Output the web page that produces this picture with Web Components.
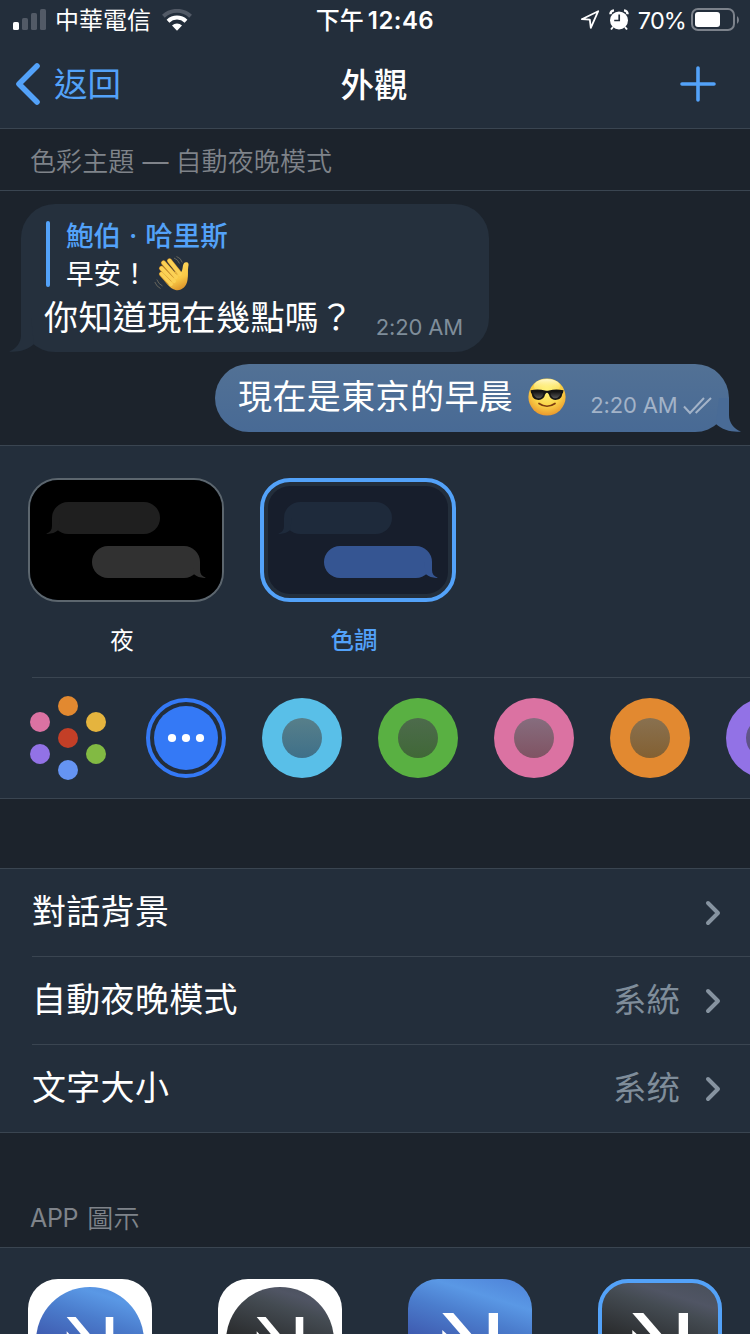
<!DOCTYPE html>
<html lang="zh-Hant">
<head>
<meta charset="utf-8">
<title>外觀</title>
<style>
html,body{margin:0;padding:0;background:#1c232c}
body{width:750px;height:1334px;overflow:hidden;font-family:Inter,"Noto Sans CJK TC",sans-serif;color:#fff;
--bar:#232e3b;--line:#3a4551;--blue:#53a2f9;--muted:#7f8d9a}
</style>
</head>
<body>
<appearance-screen></appearance-screen>
<script>
function define(name, html){
  customElements.define(name, class extends HTMLElement{
    connectedCallback(){
      if(this.shadowRoot) return;
      const t=document.createElement('template');
      t.innerHTML=typeof html==='function'?html(this):html;
      this.attachShadow({mode:'open'}).append(t.content.cloneNode(true));
    }
  });
}
const cjk='"Noto Sans CJK TC",Inter,sans-serif';

define('status-bar',`
<style>
:host{display:grid;grid-template-columns:1fr auto 1fr;height:40px;align-items:center;line-height:40px;font-size:24px;white-space:nowrap}
.l,.r{display:flex;align-items:center;height:40px}
.l{padding-left:13px}.r{justify-content:flex-end;padding-right:10px}
.c{display:flex;font-weight:600;gap:4px;height:40px}
.cj{font-family:${cjk};font-weight:500;position:relative;top:-1px}
svg{display:block;flex:none}
</style>
<div class="l">
<svg width="34" height="22" viewBox="0 0 34 22"><rect x="0" y="13" width="6" height="8" rx="1.6" fill="#fff"/><g fill="#525a66"><rect x="9" y="9" width="6" height="12" rx="1.6"/><rect x="18" y="4" width="6" height="17" rx="1.6"/><rect x="27" y="0" width="6" height="21" rx="1.6"/></g></svg>
<span class="cj" style="margin-left:8px;font-weight:400">中華電信</span>
<svg style="margin-left:11px" width="30" height="23" viewBox="0 0 30 23"><g fill="none" stroke-width="4"><path d="M1.4 7.2A20 20 0 0 1 28.6 7.2" stroke="#525a66"/><path d="M6 12.2A13 13 0 0 1 24 12.2" stroke="#fff" stroke-width="4"/></g><path d="M10 16.500a7.300 7.300 0 0 1 10 0l-5 5.200z" fill="#fff"/></svg>
</div>
<div class="c"><span class="cj">下午</span><span style="letter-spacing:.45px;position:relative;top:1px">12:46</span></div>
<div class="r">
<svg width="20" height="20" viewBox="0 0 20 20"><path d="M1.8 9.2L18.2 1.2L10.8 17.8L9.8 9.7Z" fill="none" stroke="#fff" stroke-width="1.8" stroke-linejoin="round"/></svg>
<svg style="margin-left:9px" width="20" height="22" viewBox="0 0 20 22"><circle cx="10" cy="11.4" r="9" fill="#fff"/><path d="M1.4 5.2A4 4 0 0 1 5 1.4M18.6 5.2A4 4 0 0 0 15 1.4" stroke="#fff" stroke-width="2.4" fill="none"/><path d="M4 18l-2 2.5M16 18l2 2.5" stroke="#fff" stroke-width="2"/><path d="M10.2 5.500v6H5.200" fill="none" stroke="#232e3b" stroke-width="1.700"/></svg>
<span style="margin-left:9px;font-size:23.500px;letter-spacing:-.9px;position:relative;top:1px">70%</span>
<svg style="margin-left:5px" width="49" height="24" viewBox="0 0 49 24"><rect x="1" y="1" width="42" height="21" rx="6" fill="none" stroke="#7c828b" stroke-width="2"/><rect x="4" y="4" width="25" height="15" rx="3" fill="#fff"/><path d="M46 8q2 1.500 2 4t-2 4z" fill="#7c828b"/></svg>
</div>`);

define('nav-bar',`
<style>
:host{display:grid;grid-template-columns:1fr auto 1fr;height:88px;align-items:center;font:400 33.500px/88px ${cjk};border-bottom:1px solid var(--line)}
.b{display:flex;align-items:center;color:var(--blue);padding-left:15px;height:88px}
.b span{position:relative;top:-2px}
.t{font-weight:500;position:relative;top:-1px;left:-1px}
.p{justify-self:end;margin-right:34px}
svg{display:block}
</style>
<div class="b"><svg width="26" height="44" viewBox="0 0 26 44"><path d="M22 4L4 22L22 40" fill="none" stroke="#53a2f9" stroke-width="5.600" stroke-linecap="round" stroke-linejoin="round"/></svg><span style="margin-left:13px">返回</span></div>
<div class="t">外觀</div>
<svg class="p" width="36" height="36" viewBox="0 0 36 36"><path d="M18 2V34M2 18H34" stroke="#53a2f9" stroke-width="3.600" stroke-linecap="round"/></svg>`);

define('section-title',`
<style>
:host{display:flex;box-sizing:border-box;align-items:flex-end;padding-left:30px;font:350 26px/61px ${cjk};letter-spacing:.1px;color:#7f838a;border-bottom:1px solid var(--line);white-space:nowrap}
</style><slot></slot>`);

define('chat-bubble',e=>`
<style>
:host{display:block;position:relative;box-sizing:border-box;border-radius:34px;background:var(--bubble)}
svg{position:absolute;bottom:0;width:26px;height:34px;${e.getAttribute('side')==='in'?'left:-12px;transform:scaleX(-1)':'right:-12px'}}
.b{position:relative}
</style>
<svg viewBox="0 0 26 34"><path d="M4 0H14V17C14 25 19 31 26 33.500C18 34.600 7 32 1 26Z" fill="${e.getAttribute('tail')}"/></svg>
<div class="b"><slot></slot></div>`);

define('wave-emoji',`
<style>:host{display:block;width:38px;height:38px}svg{display:block}</style>
<svg width="38" height="38" viewBox="0 0 38 38" role="img" aria-label="👋"><defs><linearGradient id="g" x1=".2" y1="0" x2=".7" y2="1"><stop offset="0" stop-color="#ffdb63"/><stop offset=".65" stop-color="#f9c947"/><stop offset="1" stop-color="#dc9329"/></linearGradient></defs>
<path d="M6.500 18.500L17 23L23 14L26.500 18.500C28.500 17.500 28.500 14 29 11.500Q29.800 7.500 33 8.300Q35.300 9 34.300 12.500C33.500 16 34.500 21 33.500 26C32.500 33 27 37.300 21.500 36C16 34.500 12 29 6.500 21.500Z" fill="url(#g)"/>
<g stroke="#c88a27" stroke-width="5" stroke-linecap="round" fill="none"><path d="M7.500 20L15 28"/><path d="M7.500 14.300L17 24.500"/><path d="M9.500 8.800L20 21"/><path d="M15.500 6.800L24.500 18"/></g>
<g stroke="#fbd155" stroke-width="3.900" stroke-linecap="round" fill="none"><path d="M7.500 20L17 30"/><path d="M7.500 14.300L20 27"/><path d="M9.500 8.800L22 23"/><path d="M15.500 6.800L26 20"/></g>
<g stroke="#66655c" stroke-width="1" fill="none"><path d="M20 4Q24 5.500 25.500 9.500M22.500 2.500Q27 4 28.300 8.500M2.800 25.500Q4.500 30 8.500 32M.8 28Q2.500 32.500 6.500 34.500"/></g></svg>`);

define('cool-emoji',`
<style>:host{display:block;width:38px;height:38px}svg{display:block}</style>
<svg width="38" height="38" viewBox="0 0 38 38" role="img" aria-label="😎"><defs><radialGradient id="f" cx=".5" cy=".35" r=".68"><stop offset="0" stop-color="#fff47c"/><stop offset=".55" stop-color="#fbd549"/><stop offset="1" stop-color="#e8912a"/></radialGradient><linearGradient id="h" x1="0" y1="0" x2="0" y2="1"><stop offset="0" stop-color="#fffce0" stop-opacity=".9"/><stop offset="1" stop-color="#fff36b" stop-opacity="0"/></linearGradient><linearGradient id="l" x1="0" y1="0" x2="0" y2="1"><stop offset="0" stop-color="#111"/><stop offset="1" stop-color="#555"/></linearGradient></defs>
<circle cx="19" cy="19" r="18.600" fill="url(#f)"/><ellipse cx="19" cy="8" rx="13" ry="7" fill="url(#h)"/>
<path d="M2.500 12.200Q10 10.500 17 12.400Q19 13 21 12.400Q28 10.500 35.500 12.200L35 14.800Q34.200 15.500 34 17C33 23 24 23.500 21.600 18.500Q20.500 14.800 19 14.800Q17.500 14.800 16.400 18.500C14 23.500 5 23 4 17Q3.800 15.500 3 14.800Z" fill="#141414"/>
<path d="M5 14.200Q11 12.500 15.500 14.500C15.500 22 6.500 22.500 5 14.200ZM33 14.200Q27 12.500 22.500 14.500C22.500 22 31.500 22.500 33 14.200Z" fill="url(#l)"/>
<path d="M11 25.500Q19 31 27 25.500" fill="none" stroke="#7c3b10" stroke-width="1.700" stroke-linecap="round"/></svg>`);

define('chat-preview',`
<style>
:host{display:flex;flex-direction:column;box-sizing:border-box;height:255px;padding:13px 21px 13px;gap:12px;border-bottom:1px solid var(--line);font-family:${cjk};white-space:nowrap}
.in{width:468px;height:148px;--bubble:#25303d}
.out{width:514px;height:68px;align-self:flex-end;--bubble:linear-gradient(#527195,#486a95)}
.quote{display:flex;margin-left:25px;padding-top:17px}
.bar{width:4px;height:66px;border-radius:2px;background:var(--blue)}
.q{margin:-6px 0 -1px 16px;font-size:27.500px;line-height:38px}
.n{color:var(--blue);font-weight:500;height:38px}
.n i{font:500 27.500px/30px Inter;padding:0 8px}
.row{display:flex;align-items:center}
.m{font-size:34px;letter-spacing:.4px}
.tm{font:400 22px/30px Inter;letter-spacing:-.15px;color:var(--muted)}
</style>
<chat-bubble class="in" side="in" tail="#25303d">
<div class="quote"><div class="bar"></div><div class="q"><div class="n">鮑伯<i>·</i>哈里斯</div><div class="row"><span>早安！</span><wave-emoji style="margin:1px 0 -1px 5px"></wave-emoji></div></div></div>
<div class="row" style="margin:0 26px 0 23px;height:52px;justify-content:space-between;line-height:52px"><span class="m">你知道現在幾點嗎？</span><span class="tm" style="padding-top:21px">2:20 AM</span></div>
</chat-bubble>
<chat-bubble class="out" side="out" tail="#496b96">
<div class="row" style="padding-left:23px;height:68px;line-height:60px"><span class="m" style="margin-top:-6px">現在是東京的早晨</span><cool-emoji style="margin:-2px 0 0 15px"></cool-emoji><span class="tm" style="color:#a3b3c8;margin-left:24px;padding-top:14px">2:20 AM</span><svg style="margin:16px 0 0 6px" width="30" height="20" viewBox="0 0 30 20"><path d="M1 10.500L7 17L21 2M12.700 17L28 2" fill="none" stroke="#a3b3c8" stroke-width="2"/></svg></div>
</chat-bubble>`);

define('theme-card',e=>{
 const s=e.hasAttribute('selected'), b=flip=>`<svg width="126" height="32" viewBox="0 0 126 32"><g ${flip?'transform="translate(112 0) scale(-1 1)"':'transform="translate(5 0)"'}><rect width="108" height="32" rx="16"/><path d="M108 16V24C108 28 110 30.500 114 31.800C110 32.300 105 31 102 28.300L100 16Z"/></g></svg>`;
 return `
<style>
:host{display:flex;flex-direction:column;width:196px}
.f{box-sizing:border-box;height:124px;border-radius:30px;padding:${s?'4px':'0'};border:${s?'4px solid var(--blue)':'2px solid #5c666e'}}
.i{box-sizing:border-box;height:100%;border-radius:${s?22:28}px;background:${s?'#171e2c':'#000'};padding:${s?'16px 12px':'22px 18px'};display:flex;flex-direction:column;gap:12px}
svg{display:block;overflow:visible}.a{fill:${s?'#1e2a3b':'#1f1f1f'}}.o{fill:${s?'#355592':'#313131'};margin-left:39px}
.t{font:400 23.500px/40px ${cjk};${s?'font-weight:500;':''}color:${s?'var(--blue)':'#fff'};text-align:center;margin:17px 8px 0 0}
</style>
<div class="f"><div class="i"><div class="a">${b(true)}</div><div class="o">${b(false)}</div></div></div><div class="t"><slot></slot></div>`});

define('accent-dot',e=>{
 const k=e.getAttribute('kind'), c=e.getAttribute('color'), m=e.getAttribute('inner')||'';
 let g;
 if(k==='wheel') g=[[40,8,'#e28930'],[12,24,'#db72a2'],[68,24,'#e5b43e'],[40,40,'#c33f27'],[12,56,'#9272e6'],[68,56,'#82ba43'],[40,72,'#6594f3']].map(a=>`<circle cx="${a[0]}" cy="${a[1]}" r="10" fill="${a[2]}"/>`).join('');
 else if(k==='more') g='<circle cx="40" cy="40" r="38" fill="none" stroke="#3479f6" stroke-width="4"/><circle cx="40" cy="40" r="32" fill="#3479f6"/><g fill="#fff"><circle cx="26" cy="40" r="4.100"/><circle cx="40" cy="40" r="4.100"/><circle cx="54" cy="40" r="4.100"/></g>';
 else {const [a,b]=m.split(','); g=`<defs><linearGradient id="g" x2="0" y2="1"><stop stop-color="${a}"/><stop offset="1" stop-color="${b}"/></linearGradient></defs><circle cx="40" cy="40" r="40" fill="${c}"/><circle cx="40" cy="40" r="20" fill="url(#g)"/>`}
 return `<style>:host{display:block;flex:none;width:80px;height:80px}:host([kind=wheel]){margin-right:2px}svg{display:block;overflow:visible}</style><svg width="80" height="80" viewBox="0 0 80 80">${g}</svg>`});

define('theme-panel',`
<style>
:host{display:block;box-sizing:border-box;height:353px;background:var(--bar);border-bottom:1px solid var(--line)}
.c{display:flex;gap:36px;box-sizing:border-box;height:231px;padding:32px 28px 0}
.d{display:flex;gap:36px;height:120px;box-sizing:border-box;padding:20px 0 0 28px;overflow:hidden}
.l{height:1px;margin-left:32px;background:var(--line)}
</style>
<div class="c"><theme-card>夜</theme-card><theme-card selected>色調</theme-card></div>
<div class="l"></div>
<div class="d"><accent-dot kind="wheel"></accent-dot><accent-dot kind="more"></accent-dot>
<accent-dot color="#59bfe8" inner="#577f8a,#3f7089"></accent-dot>
<accent-dot color="#59b042" inner="#4d6b4c,#406837"></accent-dot>
<accent-dot color="#db72a2" inner="#866d7e,#805363"></accent-dot>
<accent-dot color="#e28930" inner="#897150,#836032"></accent-dot>
<accent-dot color="#9272e6" inner="#655c89,#5a4b86"></accent-dot></div>`);

define('setting-row',e=>`
<style>
:host{display:flex;margin-left:32px;height:87px;border-bottom:1px solid var(--line);align-items:center;font:400 34px/84px ${cjk};letter-spacing:.3px;padding-right:29px}
:host(:last-of-type){margin-left:0;padding-left:32px}
span{position:relative;top:-3px}
.v{color:var(--muted);margin-left:auto;font-size:33.500px;letter-spacing:0}
svg{margin-left:25px;display:block}
</style><span><slot></slot></span><span class="v">${e.getAttribute('value')||''}</span><svg width="16" height="26" viewBox="0 0 16 26"><path d="M3 3L13 13L3 23" fill="none" stroke="#8693a0" stroke-width="4" stroke-linecap="round" stroke-linejoin="round"/></svg>`);

define('setting-list',`
<style>:host{display:block;margin-top:69px;border-top:1px solid var(--line);background:var(--bar)}</style><slot></slot>`);

define('app-icon',e=>{
 const dark=e.hasAttribute('dark'), ring=e.hasAttribute('round'), sel=e.hasAttribute('selected');
 const st=dark?'<stop stop-color="#1d1d1e"/><stop offset=".35" stop-color="#2b2d2f"/><stop offset=".65" stop-color="#444b52"/><stop offset=".76" stop-color="#505564"/><stop offset="1" stop-color="#464e58"/>':'<stop stop-color="#3b409a"/><stop offset=".3" stop-color="#3e59ae"/><stop offset=".58" stop-color="#4b7dcd"/><stop offset=".76" stop-color="#5a98e5"/><stop offset="1" stop-color="#4c7fd6"/>';
 const shape=ring?'<path d="M38.700 38H47.700L66 60H57Z"/><path d="M77.700 38H85.300V70H77.700Z"/><path d="M38.700 52.300L46 60H38.700Z"/>':'<path d="M34.300 34H45.300L66 58H55Z"/><path d="M80.700 34H90V70H80.700Z"/><path d="M34.300 51L44 60H34.300Z"/>';
 return `<style>:host{display:block;width:124px;height:124px}svg{display:block}</style>
<svg width="124" height="124" viewBox="0 0 124 124"><defs><linearGradient id="g" gradientUnits="userSpaceOnUse" x1="40" y1="112" x2="80" y2="-16">${st}</linearGradient></defs>
<rect width="124" height="124" rx="30" fill="${ring?'#fff':'url(#g)'}"/>
${ring?'<circle cx="62" cy="62" r="54" fill="url(#g)"/>':''}
<g fill="#fff">${shape}</g>
${sel?'<rect x="2" y="2" width="120" height="120" rx="28" fill="none" stroke="#53a2f9" stroke-width="4"/>':''}</svg>`});

define('icon-picker',`
<style>:host{display:flex;gap:66px;padding:31px 28px 0;height:56px;overflow:hidden;background:var(--bar)}</style>
<app-icon round></app-icon><app-icon round dark></app-icon><app-icon></app-icon><app-icon dark selected></app-icon>`);

define('appearance-screen',`
<style>
:host{display:block;width:750px;height:1334px;overflow:hidden;background:#1c232c}
header{background:var(--bar)}
.app{height:115px;line-height:59px}
.app b{font:400 25px/59px Inter;letter-spacing:-.3px;margin-right:9px;position:relative;top:1px}
.dash{font:400 26px/30px Inter;margin:0 7px 0 8px;display:inline-block;transform-origin:0 50%}
</style>
<header><status-bar></status-bar><nav-bar></nav-bar></header>
<section-title><span>色彩主題<span class="dash">—</span>自動夜晚模式</span></section-title>
<chat-preview></chat-preview>
<theme-panel></theme-panel>
<setting-list>
<setting-row>對話背景</setting-row>
<setting-row value="系統">自動夜晚模式</setting-row>
<setting-row value="系统">文字大小</setting-row>
</setting-list>
<section-title class="app"><b>APP</b><span style="position:relative;top:-1px">圖示</span></section-title>
<icon-picker></icon-picker>`);
</script>
</body>
</html>
